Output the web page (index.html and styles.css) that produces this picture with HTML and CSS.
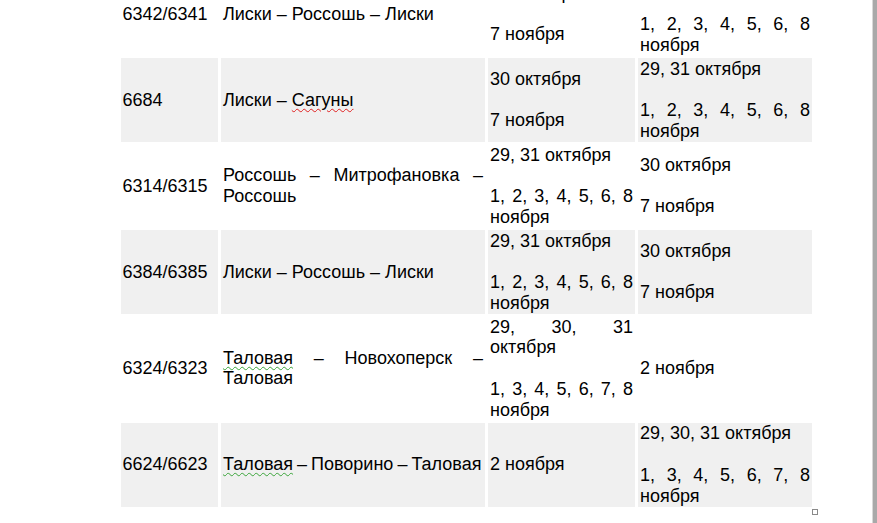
FILE: index.html
```html
<!DOCTYPE html>
<html lang="ru">
<head>
<meta charset="utf-8">
<title>График</title>
<link rel="stylesheet" href="styles.css">
</head>
<body>
<div class="window">
  <div class="page">
    <table class="sched">
      <colgroup>
        <col class="c1"><col class="c2"><col class="c3"><col class="c4">
      </colgroup>
      <tbody>
        <tr>
          <td class="num">6342/6341</td>
          <td class="route">Лиски – Россошь – Лиски</td>
          <td class="dates"><p>30 октября</p><p><br></p><p>7 ноября</p></td>
          <td class="dates"><p>29, 31 октября</p><p><br></p><p>1, 2, 3, 4, 5, 6, 8 ноября</p></td>
        </tr>
        <tr class="shade">
          <td class="num">6684</td>
          <td class="route">Лиски – <span class="spell">Сагуны</span></td>
          <td class="dates"><p>30 октября</p><p><br></p><p>7 ноября</p></td>
          <td class="dates"><p>29, 31 октября</p><p><br></p><p>1, 2, 3, 4, 5, 6, 8 ноября</p></td>
        </tr>
        <tr>
          <td class="num">6314/6315</td>
          <td class="route">Россошь – Митрофановка – Россошь</td>
          <td class="dates"><p>29, 31 октября</p><p><br></p><p>1, 2, 3, 4, 5, 6, 8 ноября</p></td>
          <td class="dates"><p>30 октября</p><p><br></p><p>7 ноября</p></td>
        </tr>
        <tr class="shade">
          <td class="num">6384/6385</td>
          <td class="route">Лиски – Россошь – Лиски</td>
          <td class="dates"><p>29, 31 октября</p><p><br></p><p>1, 2, 3, 4, 5, 6, 8 ноября</p></td>
          <td class="dates"><p>30 октября</p><p><br></p><p>7 ноября</p></td>
        </tr>
        <tr>
          <td class="num">6324/6323</td>
          <td class="route"><span class="grammar">Таловая</span> – Новохоперск – Таловая</td>
          <td class="dates"><p>29, 30, 31 октября</p><p><br></p><p>1, 3, 4, 5, 6, 7, 8 ноября</p></td>
          <td class="dates"><p>2 ноября</p></td>
        </tr>
        <tr class="shade">
          <td class="num">6624/6623</td>
          <td class="route tight"><span class="grammar">Таловая</span> – Поворино – Таловая</td>
          <td class="dates"><p>2 ноября</p></td>
          <td class="dates"><p>29, 30, 31 октября</p><p><br></p><p>1, 3, 4, 5, 6, 7, 8 ноября</p></td>
        </tr>
      </tbody>
    </table>
    <div class="endmark"></div>
  </div>
  <div class="scrollbar"></div>
</div>
</body>
</html>
```

FILE: styles.css
```css
html, body {
  margin: 0;
  padding: 0;
  background: #ffffff;
}

body {
  width: 877px;
  height: 523px;
  overflow: hidden;
  font-family: "Liberation Sans", Arial, sans-serif;
  font-size: 18px;
  color: #000000;
}

.window {
  display: flex;
  height: 523px;
}

.page {
  flex: 1;
  overflow: hidden;
}

.scrollbar {
  width: 4px;
  border-left: 1px solid #d9d9d9;
  background: #a9a9a9;
}

.sched {
  table-layout: fixed;
  border-collapse: separate;
  border-spacing: 3px 2px;
  margin-left: 118px;
  margin-top: -30px;
  width: 697px;
}

.c1 { width: 97px; }
.c2 { width: 264px; }
.c3 { width: 147px; }
.c4 { width: 174px; }

.sched td {
  padding: 0.5px 2px;
  vertical-align: middle;
  line-height: 20.75px;
  text-align: justify;
}

.sched tr.shade td {
  background: #f0f0f0;
}

.sched td.num {
  text-align: left;
  padding-left: 1.5px;
}

.sched td p {
  margin: 0;
}

.tight {
  white-space: nowrap;
  word-spacing: -1px;
}

.spell {
  text-decoration: underline wavy #e02020;
  text-decoration-thickness: 1px;
  text-underline-offset: 2px;
}

.grammar {
  text-decoration: underline wavy #3aa53a;
  text-decoration-thickness: 1px;
  text-underline-offset: 2px;
}

.endmark {
  width: 4px;
  height: 4px;
  border: 1px solid #8a8a8a;
  margin-left: 812px;
}
```
